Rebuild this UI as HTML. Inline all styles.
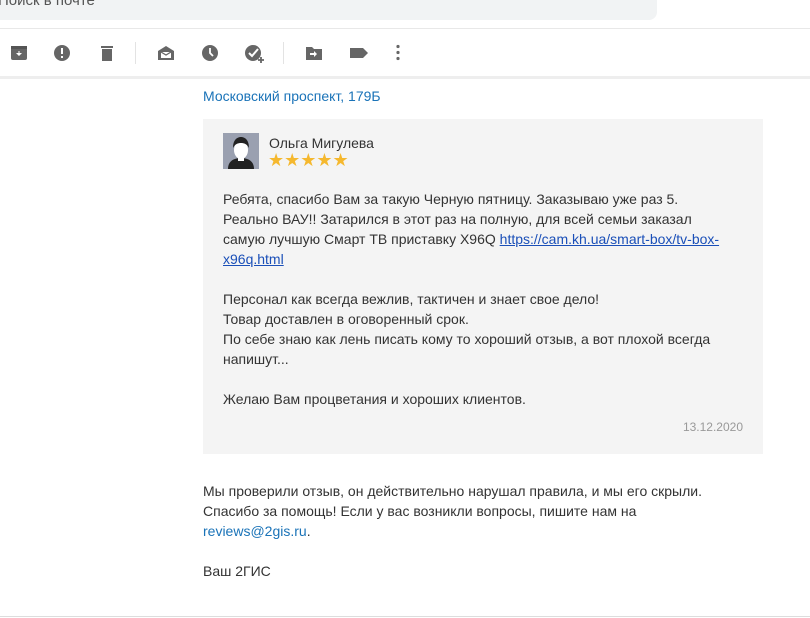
<!DOCTYPE html>
<html><head><meta charset="utf-8"><style>
body{margin:0;width:810px;height:618px;background:#fff;font-family:"Liberation Sans",Arial,sans-serif;position:relative;overflow:hidden;color:#333}
.search{position:absolute;left:0;top:0;width:657px;height:20px;background:#f1f3f4;border-radius:0 0 8px 0}
.search span{position:absolute;left:-2px;top:-8px;font-size:15px;color:#555}
.l1{position:absolute;left:0;top:28px;width:810px;height:1px;background:#e8e8e8}
.l2{position:absolute;left:0;top:76px;width:810px;height:3px;background:#eeeeee}
.l3{position:absolute;left:0;top:616px;width:810px;height:1px;background:#ddd}
.ic{position:absolute;top:44px}
.sep{position:absolute;top:42px;width:1px;height:22px;background:#e3e3e3}
.t{position:absolute;font-size:14px;line-height:20px}
a{color:#1a73b8;text-decoration:none}
.card{position:absolute;left:203px;top:119px;width:560px;height:335px;background:#f4f4f4}
</style></head><body>
<div class="search"><span>Поиск в почте</span></div>
<div class="l1"></div>
<svg class="ic" style="left:10px" width="18" height="18"><rect x="1" y="2" width="16" height="14" rx="2" fill="#666"/><rect x="1" y="2" width="16" height="3" fill="#555"/><path d="M6 9h2.5V7h1v2H12l-3 3z" fill="#fff"/></svg>
<svg class="ic" style="left:53px" width="18" height="18"><circle cx="9" cy="9" r="8" fill="#666"/><rect x="8" y="4" width="2" height="6" fill="#fff"/><rect x="8" y="12" width="2" height="2" fill="#fff"/></svg>
<svg class="ic" style="left:98px" width="18" height="18"><rect x="3" y="2" width="12" height="2" fill="#666"/><rect x="4" y="5" width="10" height="12" fill="#666"/></svg>
<div class="sep" style="left:135px"></div>
<svg class="ic" style="left:156px" width="20" height="18"><path d="M2 7l8-5 8 5v9H2z" fill="#666"/><path d="M5 8h10v6H5z" fill="#fff"/><path d="M5 8l5 3 5-3" stroke="#666" fill="none" stroke-width="1.3"/></svg>
<svg class="ic" style="left:201px" width="18" height="18"><circle cx="9" cy="9" r="8" fill="#666"/><path d="M9 4v5l3 3" stroke="#fff" stroke-width="1.8" fill="none"/></svg>
<svg class="ic" style="left:244px" width="22" height="20"><circle cx="9" cy="9" r="8" fill="#666"/><path d="M5 9l3 3 6-7" stroke="#fff" stroke-width="2" fill="none"/><path d="M17 13v6M14 16h6" stroke="#666" stroke-width="1.8"/></svg>
<div class="sep" style="left:283px"></div>
<svg class="ic" style="left:305px" width="18" height="18"><path d="M1 3h6l2 2h8v11H1z" fill="#666"/><path d="M5 9h4V7l3 3-3 3v-2H5z" fill="#fff"/></svg>
<svg class="ic" style="left:349px" width="20" height="18"><path d="M1 4h13l5 5-5 5H1z" fill="#666"/></svg>
<svg class="ic" style="left:390px" width="18" height="18"><circle cx="8" cy="2.5" r="1.6" fill="#666"/><circle cx="8" cy="8.5" r="1.6" fill="#666"/><circle cx="8" cy="14.5" r="1.6" fill="#666"/></svg>
<div class="l2"></div>
<div class="t" style="left:203px;top:86px"><a>Московский проспект, 179Б</a></div>
<div class="card">
<svg style="position:absolute;left:20px;top:14px" width="36" height="36"><rect width="36" height="36" fill="#9aa0b0"/><path d="M5 36c0-8 6-11 13-11s13 3 13 11z" fill="#222"/><ellipse cx="18" cy="17" rx="7" ry="9" fill="#fff"/><path d="M10 15c0-8 4-11 8-11s8 3 8 11c-2-4-5-5-8-5s-6 1-8 5z" fill="#222"/><path d="M15 25h6v3h-6z" fill="#fff"/></svg>
<div class="t" style="left:66px;top:14px">Ольга Мигулева</div>
<div style="position:absolute;left:65px;top:32px;font-size:18px;color:#f5b82e;line-height:18px">★★★★★</div>
<div class="t" style="left:20px;top:70px;width:505px">Ребята, спасибо Вам за такую Черную пятницу. Заказываю уже раз 5.<br>Реально ВАУ!! Затарился в этот раз на полную, для всей семьи заказал самую лучшую Смарт ТВ приставку X96Q <a style="color:#1a4fb8;text-decoration:underline">https://cam.kh.ua/smart-box/tv-box-x96q.html</a><br><br>Персонал как всегда вежлив, тактичен и знает свое дело!<br>Товар доставлен в оговоренный срок.<br>По себе знаю как лень писать кому то хороший отзыв, а вот плохой всегда напишут...<br><br>Желаю Вам процветания и хороших клиентов.</div>
<div style="position:absolute;right:20px;top:301px;font-size:12px;color:#999">13.12.2020</div>
</div>
<div class="t" style="left:203px;top:481px;width:540px">Мы проверили отзыв, он действительно нарушал правила, и мы его скрыли. Спасибо за помощь! Если у вас возникли вопросы, пишите нам на <a>reviews@2gis.ru</a>.<br><br>Ваш 2ГИС</div>
<div class="l3"></div>
</body></html>
